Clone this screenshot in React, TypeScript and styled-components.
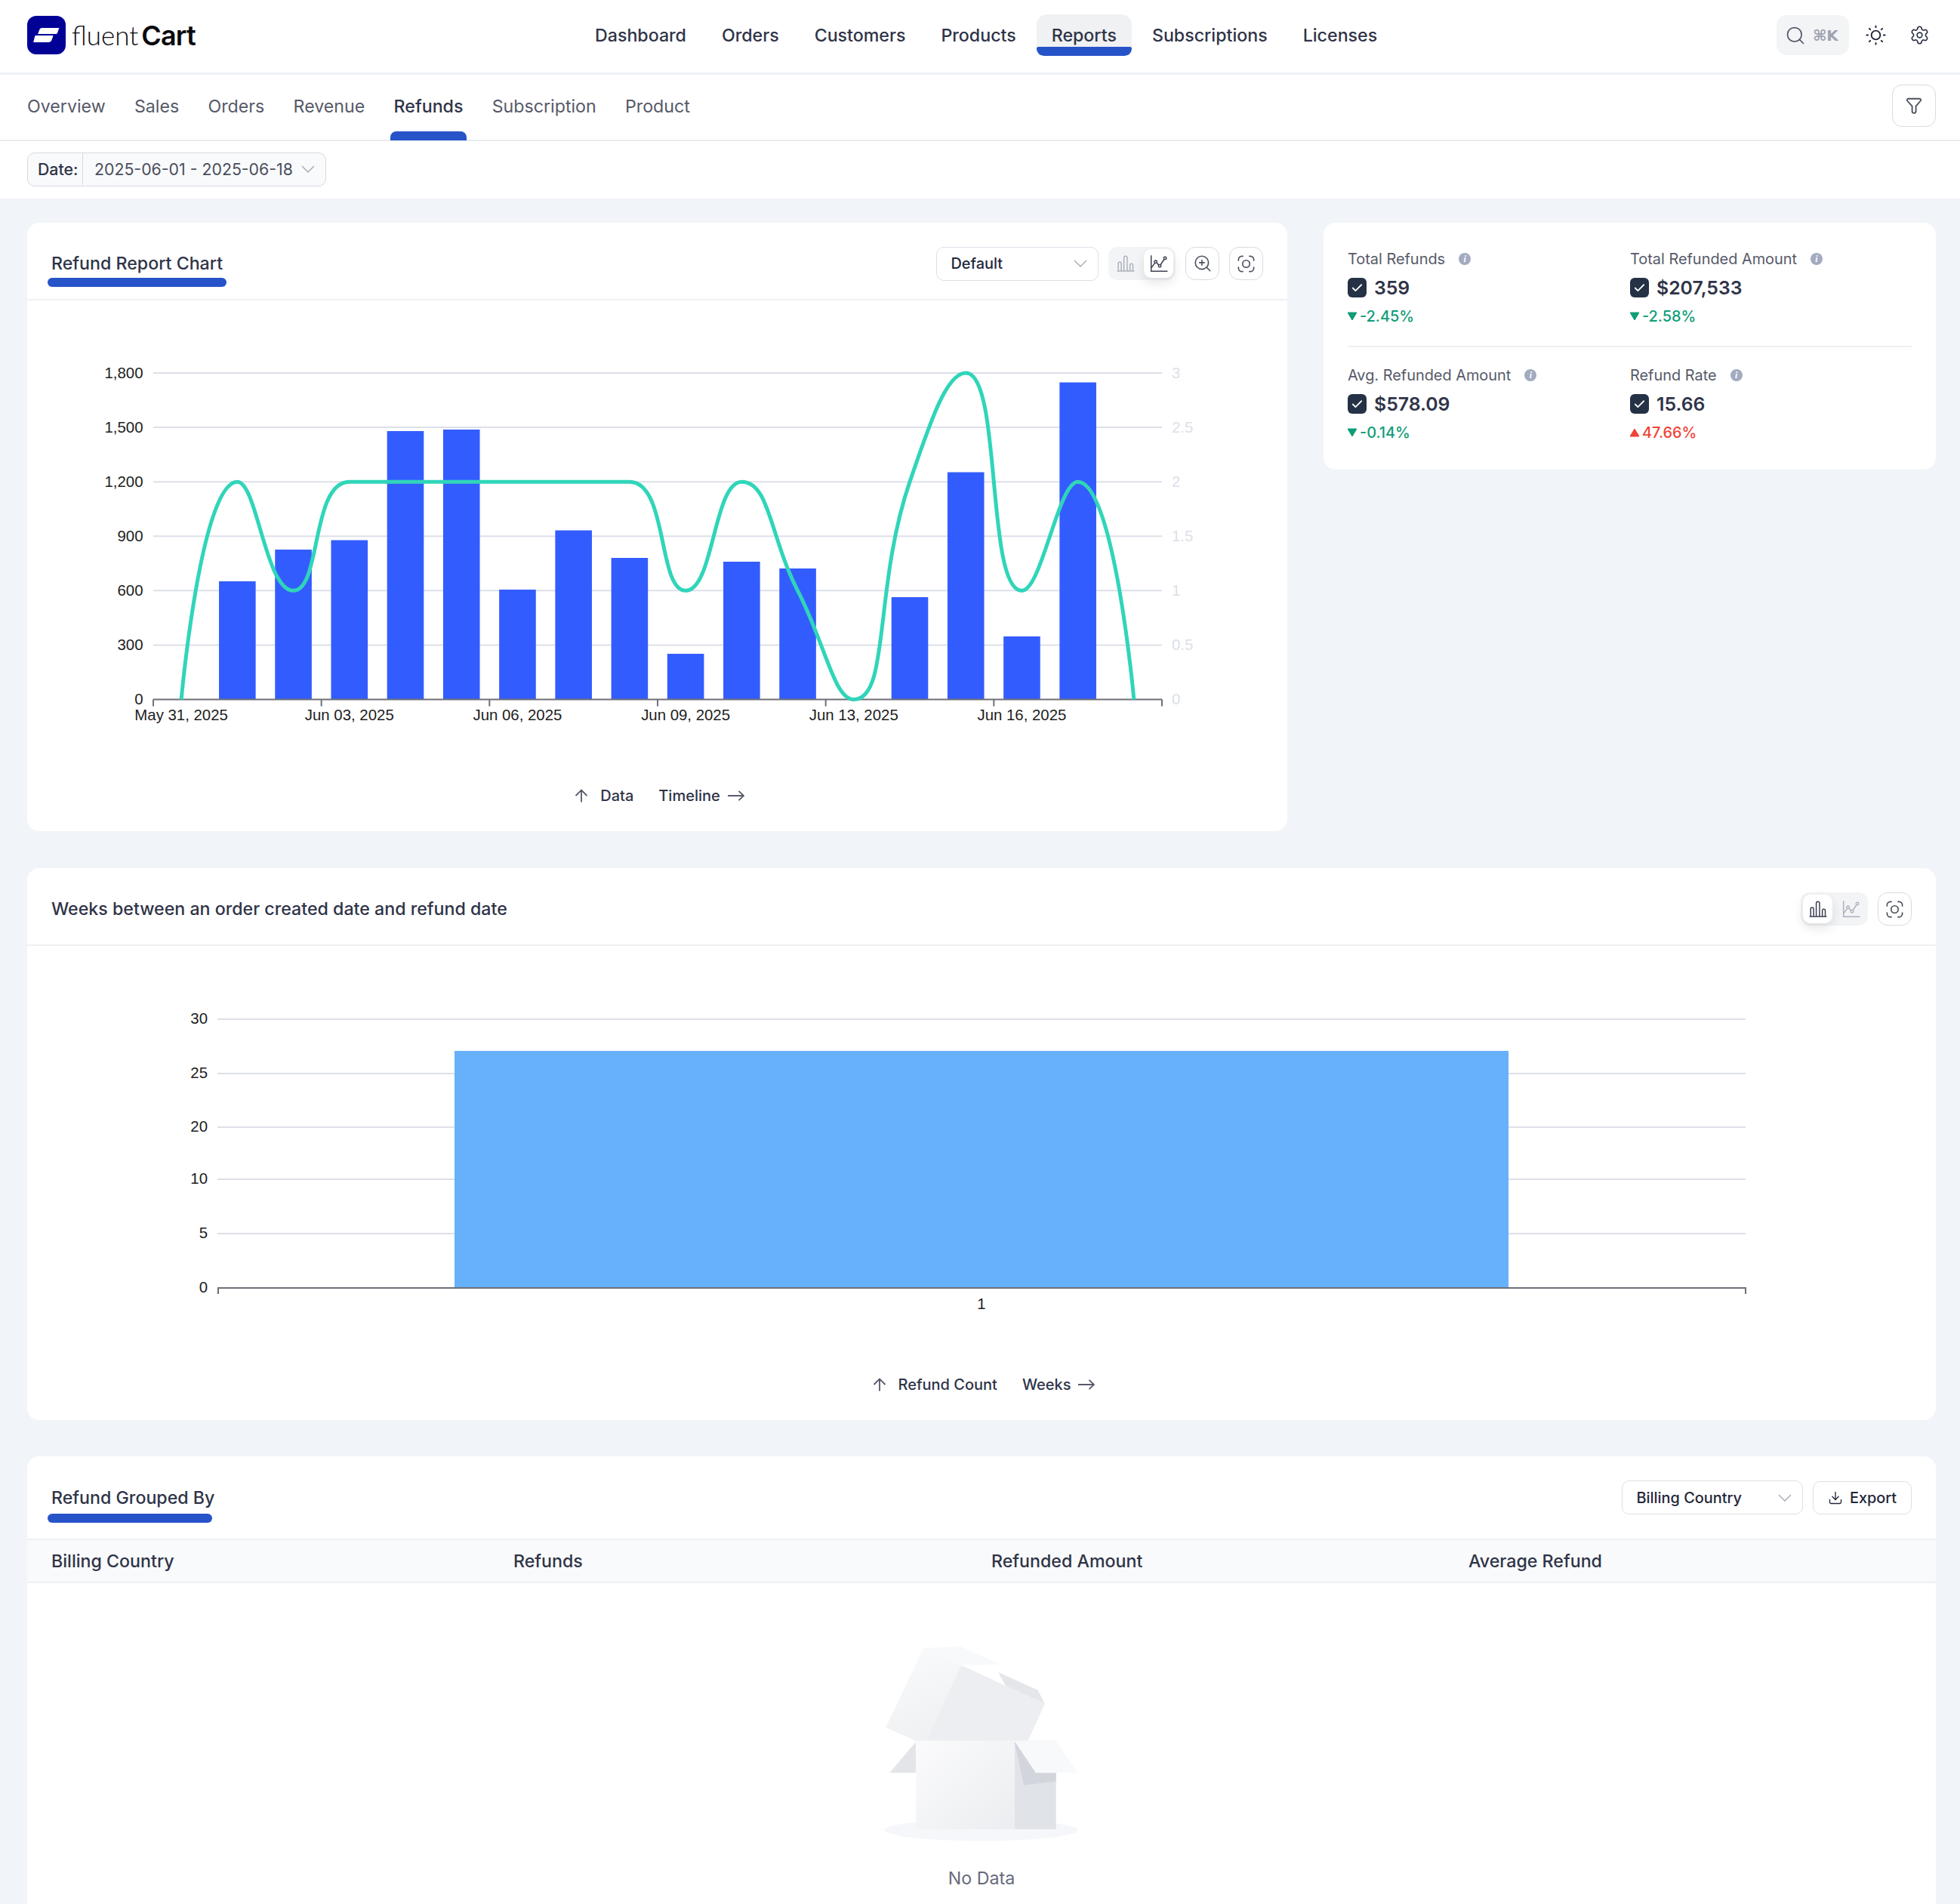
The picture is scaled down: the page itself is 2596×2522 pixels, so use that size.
import { Check, Download, Search, Settings, ZoomIn } from 'lucide-react';
import styled, { createGlobalStyle } from 'styled-components';

const GlobalStyle = createGlobalStyle`
	* {
		box-sizing: border-box;
	}
	html,
	body {
		margin: 0;
		height: 2522px;
		overflow: hidden;
		background: #ffffff;
		font-family: Inter, 'Liberation Sans', sans-serif;
		color: #2f3448;
	}
`;

const Page = styled.div`
	width: 2596px;
	height: 2522px;
	overflow: hidden;
	display: flex;
	flex-direction: column;
	background: #f1f4f9;
`;

const TopBar = styled.header`
	height: 99px;
	flex: none;
	display: flex;
	align-items: center;
	padding: 0 25px 3px 36px;
	background: #ffffff;
	border-bottom: 3px solid #eef1f6;
`;

const Logo = styled.div`
	width: 732px;
	display: flex;
	align-items: center;
	gap: 8px;
`;

const LogoText = styled.span`
	font-family: Lato, Inter, sans-serif;
	font-size: 35px;
	line-height: 1;
	font-weight: 300;
	color: #0b0b0f;

	b {
		font-family: Inter, sans-serif;
		font-weight: 600;
		font-size: 36px;
		letter-spacing: -0.8px;
		margin-left: 4px;
	}
`;

const MainNav = styled.nav`
	display: flex;
	gap: 7px;
`;

const NavItem = styled.a<{ $active?: boolean }>`
	position: relative;
	height: 55px;
	padding: 0 20px;
	display: flex;
	align-items: center;
	font-size: 23.2px;
	font-weight: 500;
	color: #2f3448;
	border-radius: 14px 14px 12px 12px;
	background: ${(p) => (p.$active ? '#f0f1f2' : 'transparent')};

	&::after {
		content: '';
		display: ${(p) => (p.$active ? 'block' : 'none')};
		position: absolute;
		left: 0;
		right: 0;
		bottom: 0;
		height: 12px;
		background: #2753c9;
		border-radius: 3px 3px 12px 12px;
	}
`;

const TopActions = styled.div`
	margin-left: auto;
	display: flex;
	align-items: center;
	color: #2f3448;
`;

const SearchPill = styled.div`
	width: 96px;
	height: 53px;
	margin-right: 6px;
	padding: 0 0 0 11px;
	display: flex;
	align-items: center;
	gap: 9px;
	border-radius: 14px;
	background: #f3f4f6;
	color: #565a69;
`;

const Shortcut = styled.span`
	font-size: 20px;
	font-weight: 600;
	color: #9fa3b0;
	font-family: 'DejaVu Sans', Inter, sans-serif;
	white-space: nowrap;
	letter-spacing: -0.3px;
`;

const IconSlot = styled.span`
	width: 58px;
	display: flex;
	justify-content: center;
`;

const SubNav = styled.div`
	height: 88px;
	flex: none;
	display: flex;
	align-items: center;
	padding: 0 32px 0 31px;
	background: #ffffff;
	border-bottom: 2px solid #e9ebef;
`;

const SubTabs = styled.div`
	height: 100%;
	display: flex;
	gap: 28.3px;
`;

const SubTab = styled.a<{ $active?: boolean }>`
	position: relative;
	padding: 0 5px 2px;
	display: flex;
	align-items: center;
	font-size: 23.2px;
	font-weight: ${(p) => (p.$active ? 500 : 400)};
	color: ${(p) => (p.$active ? '#2f3448' : '#565a69')};

	&::after {
		content: '';
		display: ${(p) => (p.$active ? 'block' : 'none')};
		position: absolute;
		left: 0;
		right: 0;
		bottom: -1px;
		height: 12px;
		background: #2753c9;
		border-radius: 8px 8px 0 0;
	}
`;

const IconButton = styled.button<{ $w?: number; $h?: number }>`
	width: ${(p) => p.$w ?? 45}px;
	height: ${(p) => p.$h ?? 44}px;
	padding: 0;
	display: flex;
	align-items: center;
	justify-content: center;
	background: #ffffff;
	border: 1.5px solid #d9dbe3;
	border-radius: 13px;
	color: #4b4f5e;
`;

const FilterButton = styled(IconButton)`
	margin-left: auto;
	margin-bottom: 4px;
`;

const FilterRow = styled.div`
	height: 76px;
	flex: none;
	padding: 15px 36px 0;
	background: #ffffff;
`;

const DateField = styled.div`
	width: 396px;
	height: 45px;
	padding-bottom: 1px;
	display: flex;
	align-items: center;
	background: #f9fafb;
	border: 1.5px solid #d6d9e0;
	border-radius: 10px;
	font-size: 21.3px;
	color: #4a4e5d;
`;

const DateLabel = styled.span`
	width: 73px;
	height: 100%;
	flex: none;
	padding-left: 13px;
	display: flex;
	align-items: center;
	font-weight: 500;
	color: #2f3448;
	border-right: 1.5px solid #d6d9e0;
`;

const DateValue = styled.span`
	padding-left: 15px;
	flex: 1;
	white-space: nowrap;
`;

const ChevronMark = styled.svg`
	flex: none;
	margin-right: 14px;
	color: #a6a9b4;
`;

const Main = styled.main`
	padding: 32px 32px 0 36px;
	display: flex;
	flex-direction: column;
	gap: 48px;
`;

const TopGrid = styled.div`
	margin-bottom: 1px;
	display: grid;
	grid-template-columns: 1669px 1fr;
	column-gap: 48px;
	align-items: start;
`;

const Card = styled.section`
	background: #ffffff;
	border-radius: 16px;
	overflow: hidden;
`;

const CardHeader = styled.div<{ $h?: number; $bare?: boolean }>`
	height: ${(p) => p.$h ?? 103}px;
	padding: ${(p) => (p.$bare ? '0 32px' : '7px 32px 0')};
	display: flex;
	align-items: center;
	justify-content: space-between;
	border-bottom: ${(p) => (p.$bare ? 'none' : '2px solid #f0f1f4')};
`;

const CardTitle = styled.h2`
	margin: 0;
	font-size: 23.2px;
	line-height: 30px;
	font-weight: 500;
	color: #2f3448;
`;

const TabbedTitle = styled.div<{ $offset: number; $gap: number; $inset: number }>`
	margin: ${(p) => p.$offset}px 0 0 -4px;
	padding: 0 4px;
	display: flex;
	flex-direction: column;
	gap: ${(p) => p.$gap}px;

	&::after {
		content: '';
		height: 12px;
		margin: 0 ${(p) => p.$inset}px 0 -5px;
		background: #2753c9;
		border-radius: 6px;
	}
`;

const Controls = styled.div`
	display: flex;
	align-items: center;
	gap: 13px;
`;

const SelectBox = styled.div<{ $w: number }>`
	width: ${(p) => p.$w}px;
	height: 45px;
	padding-left: 18.5px;
	display: flex;
	align-items: center;
	justify-content: space-between;
	background: #ffffff;
	border: 1.5px solid #dcdfe6;
	border-radius: 10px;
	font-size: 19.9px;
	font-weight: 500;
	color: #23273a;
`;

const ToggleGroup = styled.div`
	width: 89px;
	height: 44px;
	padding: 3px;
	display: flex;
	align-items: center;
	justify-content: space-between;
	background: #f3f4f6;
	border-radius: 12px;
`;

const ToggleButton = styled.span<{ $active?: boolean }>`
	width: 39px;
	height: 38px;
	display: flex;
	align-items: center;
	justify-content: center;
	border-radius: 10px;
	background: ${(p) => (p.$active ? '#ffffff' : 'transparent')};
	box-shadow: ${(p) => (p.$active ? '0 6px 14px rgba(40, 44, 60, 0.12)' : 'none')};
	color: ${(p) => (p.$active ? '#3d4152' : '#aeb1bf')};
`;

const ChartSvg = styled.svg`
	display: block;
`;

const AxisText = styled.text<{ $muted?: boolean }>`
	font-family: 'Liberation Sans', Arial, sans-serif;
	font-size: 20.4px;
	fill: ${(p) => (p.$muted ? '#dcdfe9' : '#1e1e22')};
`;

const AxisLegend = styled.div`
	height: 48px;
	margin-bottom: 23px;
	padding-left: 6px;
	display: flex;
	align-items: center;
	justify-content: center;
	gap: 33px;
	font-size: 20px;
	font-weight: 500;
	color: #2f3448;
`;

const LegendItem = styled.span<{ $gap: number }>`
	display: flex;
	align-items: center;
	gap: ${(p) => p.$gap}px;

	svg {
		color: #565a69;
	}
`;

const StatsCard = styled(Card)`
	padding: 0 32px;
	height: 327px;
`;

const StatsRow = styled.div<{ $first?: boolean }>`
	height: ${(p) => (p.$first ? 165 : 162)}px;
	padding-top: ${(p) => (p.$first ? 35 : 24)}px;
	display: grid;
	grid-template-columns: 374px 1fr;
	border-bottom: ${(p) => (p.$first ? '2px solid #f0f1f5' : 'none')};
`;

const Stat = styled.div`
	display: flex;
	flex-direction: column;
	align-items: flex-start;
`;

const StatLabel = styled.div`
	height: 26px;
	display: flex;
	align-items: center;
	gap: 18px;
	font-size: 19.9px;
	color: #565a69;
`;

const InfoDot = styled.span`
	width: 16px;
	height: 16px;
	display: flex;
	align-items: center;
	justify-content: center;
	border-radius: 50%;
	background: #a2abc0;
	color: #ffffff;
	font-family: 'Liberation Serif', serif;
	font-size: 12px;
	font-weight: 700;
	font-style: italic;
`;

const StatValue = styled.div`
	margin-top: 12px;
	height: 26px;
	display: flex;
	align-items: center;
	gap: 10px;
	font-size: 24.8px;
	font-weight: 600;
	color: #2f3448;
`;

const CheckBox = styled.span`
	width: 25px;
	height: 26px;
	display: flex;
	align-items: center;
	justify-content: center;
	background: #253245;
	border-radius: 6px;
	color: #ffffff;
`;

const StatDelta = styled.div<{ $up?: boolean }>`
	margin-top: 12px;
	height: 26px;
	display: flex;
	align-items: center;
	gap: 4px;
	font-size: 19.9px;
	font-weight: 500;
	color: ${(p) => (p.$up ? '#f04438' : '#0f9d76')};
`;

const ExportButton = styled.button`
	width: 131px;
	height: 44px;
	padding: 0;
	display: flex;
	align-items: center;
	justify-content: center;
	gap: 9px;
	background: #ffffff;
	border: 1.5px solid #dcdfe6;
	border-radius: 10px;
	font-family: inherit;
	font-size: 19.9px;
	font-weight: 500;
	color: #23273a;
`;

const TableHead = styled.div`
	height: 59px;
	padding-left: 32px;
	display: grid;
	grid-template-columns: 612px 633px 632px 1fr;
	align-items: center;
	background: #f9fafb;
	border-top: 2px solid #eef0f3;
	border-bottom: 2px solid #eef0f3;
	font-size: 23.2px;
	font-weight: 500;
	color: #2f3448;
`;

const EmptyState = styled.div`
	padding-top: 81px;
	display: flex;
	flex-direction: column;
	align-items: center;
	height: 500px;
`;

const EmptyText = styled.div`
	margin-top: 29px;
	font-size: 23.2px;
	line-height: 30px;
	color: #656a7b;
`;

type Pt = [number, number];

// same curve as the chart library's smooth line
function smoothPath(pts: Pt[], smooth = 0.5) {
	let d = `M${pts[0][0]} ${pts[0][1]}`;
	let [cp0x, cp0y] = pts[0];
	for (let i = 0; i < pts.length - 1; i++) {
		const [x, y] = pts[i];
		const [nx, ny] = pts[i + 1];
		let cp1x = nx;
		let cp1y = ny;
		let nextX = nx;
		let nextY = ny;
		if (i + 2 < pts.length) {
			const [nnx, nny] = pts[i + 2];
			const vx = nnx - x;
			const vy = nny - y;
			const lenPrev = Math.hypot(nx - x, ny - y);
			const lenNext = Math.hypot(nnx - nx, nny - ny);
			const ratio = lenNext / (lenNext + lenPrev);
			nextX = nx + vx * smooth * ratio;
			nextY = ny + vy * smooth * ratio;
			nextX = Math.max(Math.min(nextX, Math.max(nnx, nx)), Math.min(nnx, nx));
			nextY = Math.max(Math.min(nextY, Math.max(nny, ny)), Math.min(nny, ny));
			const dx = nextX - nx;
			const dy = nextY - ny;
			cp1x = nx - (dx * lenPrev) / lenNext;
			cp1y = ny - (dy * lenPrev) / lenNext;
			cp1x = Math.max(Math.min(cp1x, Math.max(x, nx)), Math.min(x, nx));
			cp1y = Math.max(Math.min(cp1y, Math.max(y, ny)), Math.min(y, ny));
			nextX = nx + ((nx - cp1x) * lenNext) / lenPrev;
			nextY = ny + ((ny - cp1y) * lenNext) / lenPrev;
		}
		d += ` C${cp0x} ${cp0y} ${cp1x} ${cp1y} ${nx} ${ny}`;
		cp0x = nextX;
		cp0y = nextY;
	}
	return d;
}

const reportLeft = 203;
const reportRight = 1539;
const reportStep = (reportRight - reportLeft) / 18;
const reportZero = 926.5;
const reportRow = 72.08;
const barTops = [0, 770, 728, 715.5, 571, 569, 781, 702.5, 739, 866, 744, 753, 0, 791, 625.5, 843, 506.5, 0];
const lineValues = [0, 2, 1, 2, 2, 2, 2, 2, 2, 1, 2, 1, 0, 2, 3, 1, 2, 0];
const leftTicks = ['0', '300', '600', '900', '1,200', '1,500', '1,800'];
const rightTicks = ['0', '0.5', '1', '1.5', '2', '2.5', '3'];
const dateTicks = ['May 31, 2025', 'Jun 03, 2025', 'Jun 06, 2025', 'Jun 09, 2025', 'Jun 13, 2025', 'Jun 16, 2025'];

function ReportChart() {
	const linePts = lineValues.map((v, i): Pt => [reportLeft + reportStep * (i + 0.5), reportZero - v * reportRow * 2]);
	return (
		<ChartSvg width={1669} height={632} viewBox="36 398 1669 632">
			{leftTicks.map((label, i) => (
				<g key={label}>
					{i > 0 && <line x1={reportLeft} x2={reportRight} y1={reportZero - i * reportRow} y2={reportZero - i * reportRow} stroke="#dde0ea" strokeWidth={2} />}
					<AxisText x={189.5} y={reportZero - i * reportRow + 6.5} textAnchor="end">
						{label}
					</AxisText>
					<AxisText $muted x={1552} y={reportZero - i * reportRow + 6.5}>
						{rightTicks[i]}
					</AxisText>
				</g>
			))}
			{barTops.map(
				(top, i) =>
					top > 0 && <rect key={i} x={reportLeft + reportStep * (i + 0.5) - 24.3} y={top} width={48.6} height={reportZero - top} fill="#335cff" />,
			)}
			<path d={`M${reportLeft} ${reportZero}H${reportRight}`} stroke="#6e7079" strokeWidth={2} />
			{[0, 3, 6, 9, 12, 15, 18].map((n) => (
				<line key={n} x1={reportLeft + n * reportStep} x2={reportLeft + n * reportStep} y1={reportZero} y2={reportZero + 9} stroke="#6e7079" strokeWidth={2} />
			))}
			<path d={smoothPath(linePts)} fill="none" stroke="#30d5b9" strokeWidth={5} />
			{dateTicks.map((label, i) => (
				<AxisText key={label} x={reportLeft + reportStep * (i * 3 + 0.5)} y={954} textAnchor="middle">
					{label}
				</AxisText>
			))}
		</ChartSvg>
	);
}

const weekTicks: [string, number][] = [
	['30', 1350],
	['25', 1422],
	['20', 1493],
	['10', 1562],
	['5', 1634],
];

function WeeksChart() {
	return (
		<ChartSvg width={2528} height={557} viewBox="36 1253 2528 557">
			{weekTicks.map(([label, y]) => (
				<g key={label}>
					<line x1={288} x2={2312} y1={y} y2={y} stroke="#dde0ea" strokeWidth={2} />
					<AxisText x={275} y={y + 6} textAnchor="end">
						{label}
					</AxisText>
				</g>
			))}
			<rect x={602} y={1392} width={1396} height={314} fill="#67b0fa" />
			<path d="M289 1714V1706H2312V1714" fill="none" stroke="#6e7079" strokeWidth={2} />
			<AxisText x={275} y={1712} textAnchor="end">
				0
			</AxisText>
			<AxisText x={1300} y={1734} textAnchor="middle">
				1
			</AxisText>
		</ChartSvg>
	);
}

function Chevron() {
	return (
		<ChevronMark width="18" height="10" viewBox="0 0 18 10" fill="none" stroke="currentColor" strokeWidth="1.4">
			<path d="M1 1l8 8 8-8" />
		</ChevronMark>
	);
}

function BarsIcon() {
	return (
		<svg width="26" height="26" viewBox="0 0 24 24" fill="none" stroke="currentColor" strokeWidth="1.4">
			<path d="M3 21V12a1.8 1.8 0 0 1 3.6 0v9M9.8 21V5a2 2 0 0 1 4 0v16M17.2 21v-7a1.8 1.8 0 0 1 3.6 0v7M1.5 21.2h21" />
		</svg>
	);
}

function LineIcon() {
	return (
		<svg width="26" height="26" viewBox="0 0 24 24" fill="none" stroke="currentColor" strokeWidth="1.4">
			<path d="M2.5 2v19.5h20M3 17l5-7 5 5 6-9" />
			<circle cx="8" cy="10" r="1.6" fill="#ffffff" />
			<circle cx="13" cy="15" r="1.6" fill="#ffffff" />
			<circle cx="19.5" cy="5.5" r="1.6" fill="#ffffff" />
		</svg>
	);
}

function ScreenshotIcon() {
	return (
		<svg width="27" height="27" viewBox="0 0 24 24" fill="none" stroke="currentColor" strokeWidth="1.5" strokeLinecap="round">
			<circle cx="12" cy="12" r="4.2" />
			<path d="M3 8V7a4 4 0 0 1 4-4h1M16 3h1a4 4 0 0 1 4 4v1M21 16v1a4 4 0 0 1-4 4h-1M8 21H7a4 4 0 0 1-4-4v-1" />
		</svg>
	);
}

function LongArrowUp() {
	return (
		<svg width="18" height="18" viewBox="0 0 18 18" fill="none" stroke="currentColor" strokeWidth="1.8">
			<path d="M9 17.5V1.5M1.5 9L9 1.5 16.5 9" />
		</svg>
	);
}

function LongArrowRight() {
	return (
		<svg width="22" height="14" viewBox="0 0 22 14" fill="none" stroke="currentColor" strokeWidth="1.8">
			<path d="M0 7h21M14.5 .8L21 7l-6.5 6.2" />
		</svg>
	);
}

function SunIcon() {
	return (
		<svg width="27" height="27" viewBox="0 0 24 24" fill="none" stroke="#1f2433" strokeWidth="1.7" strokeLinecap="round">
			<circle cx="12" cy="12" r="5.2" />
			<path d="M12 1.2v1.6M12 21.2v1.6M1.2 12h1.6M21.2 12h1.6M4.4 4.4l1.1 1.1M18.5 18.5l1.1 1.1M4.4 19.6l1.1-1.1M18.5 5.5l1.1-1.1" />
		</svg>
	);
}

function FunnelIcon() {
	return (
		<svg width="26" height="26" viewBox="0 0 24 24" fill="none" stroke="currentColor" strokeWidth="1.7" strokeLinejoin="round">
			<path d="M5 3.5h14a1.5 1.5 0 0 1 1.1 2.5L14.4 12.6v6.2a2.3 2.3 0 0 1-4.6 0v-6.2L3.9 6A1.5 1.5 0 0 1 5 3.5z" />
		</svg>
	);
}

function LogoMark() {
	return (
		<svg width="51" height="51" viewBox="0 0 51 51">
			<rect width="51" height="51" rx="12" fill="#010196" />
			<path d="M19.5 16h22.8l-2.2 6.4c-.4 1.1-1.4 1.6-2.5 1.6H14.2l1.8-5c.6-1.8 1.8-3 3.5-3z" fill="#ffffff" />
			<path d="M11.5 26h23l-1.8 5.6c-.6 1.8-2 3.4-4 3.4H8.2l1.6-6.5c.3-1.4.7-2.5 1.7-2.5z" fill="#ffffff" />
		</svg>
	);
}

function EmptyBox() {
	return (
		<svg width="264" height="266" viewBox="440 700 690 670" preserveAspectRatio="none">
			<defs>
				<linearGradient id="boxFront" x1="0" y1="0" x2="1" y2="1">
					<stop offset="0" stopColor="#fbfbfc" />
					<stop offset="1" stopColor="#ebedf0" />
				</linearGradient>
				<linearGradient id="lidSide" x1="0.3" y1="0" x2="0.6" y2="1">
					<stop offset="0" stopColor="#f9fafb" />
					<stop offset="1" stopColor="#eff0f2" />
				</linearGradient>
			</defs>
			<ellipse cx="784" cy="1320" rx="335" ry="36" fill="#f6f7fb" />
			<polygon points="558,1025 467,1129 558,1129" fill="#e3e5e8" />
			<rect x="899" y="1022" width="144" height="295" fill="#e0e3e8" />
			<polygon points="899,1025 973,1129 1043,1129 1043,1158 932,1170" fill="#d2d5dc" />
			<polygon points="899,1022 1042,1022 1117,1129 973,1129" fill="#f8f9fb" />
			<rect x="558" y="1022" width="341" height="295" fill="url(#boxFront)" />
			<polygon points="585,712 715,708 850,767 715,770" fill="#f8f9fb" />
			<polygon points="843,793 980,853 1004,899 868,838" fill="#e4e6e9" />
			<polygon points="585,712 715,770 592,1022 558,1022 453,978" fill="url(#lidSide)" />
			<polygon points="715,770 1004,899 946,1022 592,1022" fill="#eceef1" />
		</svg>
	);
}

const navItems = ['Dashboard', 'Orders', 'Customers', 'Products', 'Reports', 'Subscriptions', 'Licenses'];
const subTabs = ['Overview', 'Sales', 'Orders', 'Revenue', 'Refunds', 'Subscription', 'Product'];
const stats = [
	[
		{ label: 'Total Refunds', value: '359', delta: '-2.45%' },
		{ label: 'Total Refunded Amount', value: '$207,533', delta: '-2.58%' },
	],
	[
		{ label: 'Avg. Refunded Amount', value: '$578.09', delta: '-0.14%' },
		{ label: 'Refund Rate', value: '15.66', delta: '47.66%', up: true },
	],
];

export default function App() {
	return (
		<Page>
			<GlobalStyle />
			<TopBar>
				<Logo>
					<LogoMark />
					<LogoText>
						fluent<b>Cart</b>
					</LogoText>
				</Logo>
				<MainNav>
					{navItems.map((item) => (
						<NavItem key={item} $active={item === 'Reports'}>
							{item}
						</NavItem>
					))}
				</MainNav>
				<TopActions>
					<SearchPill>
						<Search size={28} strokeWidth={1.5} />
						<Shortcut>⌘K</Shortcut>
					</SearchPill>
					<IconSlot>
						<SunIcon />
					</IconSlot>
					<IconSlot>
						<Settings size={27} strokeWidth={1.5} />
					</IconSlot>
				</TopActions>
			</TopBar>

			<SubNav>
				<SubTabs>
					{subTabs.map((tab) => (
						<SubTab key={tab} $active={tab === 'Refunds'}>
							{tab}
						</SubTab>
					))}
				</SubTabs>
				<FilterButton $w={58} $h={56}>
					<FunnelIcon />
				</FilterButton>
			</SubNav>

			<FilterRow>
				<DateField>
					<DateLabel>Date:</DateLabel>
					<DateValue>2025-06-01 - 2025-06-18</DateValue>
					<Chevron />
				</DateField>
			</FilterRow>

			<Main>
				<TopGrid>
					<Card>
						<CardHeader>
							<TabbedTitle $offset={15} $gap={4} $inset={-5}>
								<CardTitle>Refund Report Chart</CardTitle>
							</TabbedTitle>
							<Controls>
								<SelectBox $w={215}>
									Default
									<Chevron />
								</SelectBox>
								<ToggleGroup>
									<ToggleButton>
										<BarsIcon />
									</ToggleButton>
									<ToggleButton $active>
										<LineIcon />
									</ToggleButton>
								</ToggleGroup>
								<IconButton>
									<ZoomIn size={26} strokeWidth={1.5} />
								</IconButton>
								<IconButton>
									<ScreenshotIcon />
								</IconButton>
							</Controls>
						</CardHeader>
						<ReportChart />
						<AxisLegend>
							<LegendItem $gap={16}>
								<LongArrowUp />
								Data
							</LegendItem>
							<LegendItem $gap={10}>
								Timeline
								<LongArrowRight />
							</LegendItem>
						</AxisLegend>
					</Card>

					<StatsCard>
						{stats.map((row, r) => (
							<StatsRow key={r} $first={r === 0}>
								{row.map((s) => (
									<Stat key={s.label}>
										<StatLabel>
											{s.label}
											<InfoDot>i</InfoDot>
										</StatLabel>
										<StatValue>
											<CheckBox>
												<Check size={17} strokeWidth={2.5} />
											</CheckBox>
											{s.value}
										</StatValue>
										<StatDelta $up={s.up}>
											<svg width="12" height="12" viewBox="0 0 12 12">
												<path d={s.up ? 'M6 1l6 10H0z' : 'M0 1h12L6 11z'} fill="currentColor" stroke="currentColor" strokeLinejoin="round" />
											</svg>
											{s.delta}
										</StatDelta>
									</Stat>
								))}
							</StatsRow>
						))}
					</StatsCard>
				</TopGrid>

				<Card>
					<CardHeader>
						<CardTitle>Weeks between an order created date and refund date</CardTitle>
						<Controls>
							<ToggleGroup>
								<ToggleButton $active>
									<BarsIcon />
								</ToggleButton>
								<ToggleButton>
									<LineIcon />
								</ToggleButton>
							</ToggleGroup>
							<IconButton>
								<ScreenshotIcon />
							</IconButton>
						</Controls>
					</CardHeader>
					<WeeksChart />
					<AxisLegend>
						<LegendItem $gap={16}>
							<LongArrowUp />
							Refund Count
						</LegendItem>
						<LegendItem $gap={10}>
							Weeks
							<LongArrowRight />
						</LegendItem>
					</AxisLegend>
				</Card>

				<Card>
					<CardHeader $h={109} $bare>
						<TabbedTitle $offset={19} $gap={6} $inset={3}>
							<CardTitle>Refund Grouped By</CardTitle>
						</TabbedTitle>
						<Controls>
							<SelectBox $w={240}>
								Billing Country
								<Chevron />
							</SelectBox>
							<ExportButton>
								<Download size={20} strokeWidth={1.6} />
								Export
							</ExportButton>
						</Controls>
					</CardHeader>
					<TableHead>
						<span>Billing Country</span>
						<span>Refunds</span>
						<span>Refunded Amount</span>
						<span>Average Refund</span>
					</TableHead>
					<EmptyState>
						<EmptyBox />
						<EmptyText>No Data</EmptyText>
					</EmptyState>
				</Card>
			</Main>
		</Page>
	);
}
